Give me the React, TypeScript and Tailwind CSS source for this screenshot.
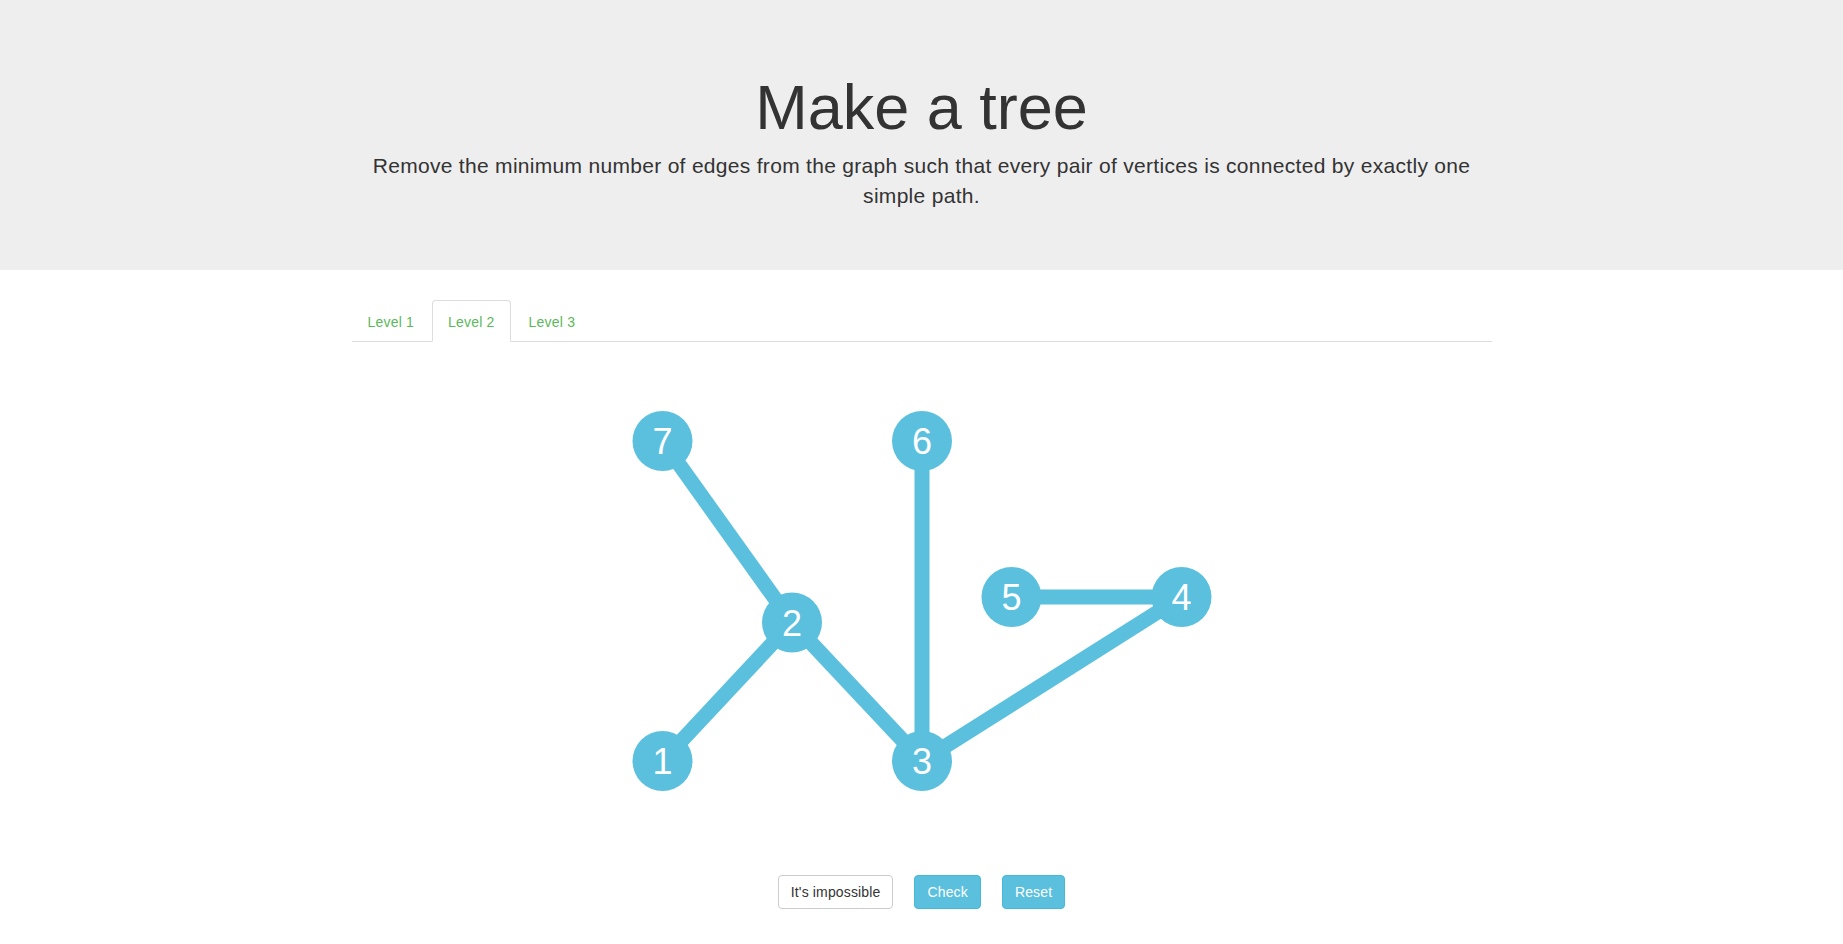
const FONT = { fontFamily: '"Liberation Sans", Arial, Helvetica, sans-serif' };

// graph coordinates are relative to the container content box
const nodes: Record<number, [number, number]> = {
  1: [310.5, 420],
  2: [440, 281.5],
  3: [570, 420],
  4: [829.5, 256],
  5: [659.5, 256],
  6: [570, 100],
  7: [310.5, 100],
};

const edges: [number, number][] = [
  [7, 2],
  [1, 2],
  [2, 3],
  [6, 3],
  [5, 4],
  [3, 4],
];

function Graph() {
  return (
    <svg width="1140" height="533" viewBox="0 1 1140 533" className="block">
      {edges.map(([a, b]) => (
        <line
          key={`${a}-${b}`}
          x1={nodes[a][0]}
          y1={nodes[a][1]}
          x2={nodes[b][0]}
          y2={nodes[b][1]}
          stroke="#5bc0de"
          strokeWidth={15}
        />
      ))}
      {Object.entries(nodes).map(([id, [x, y]]) => (
        <g key={id}>
          <circle cx={x} cy={y} r={30} fill="#5bc0de" />
          <text
            x={x}
            y={y + 13}
            textAnchor="middle"
            fill="#fff"
            fontSize={36}
            style={FONT}
          >
            {id}
          </text>
        </g>
      ))}
    </svg>
  );
}

export default function App() {
  const tabs = ["Level 1", "Level 2", "Level 3"];
  const active = 1;

  return (
    <div className="min-h-screen bg-white text-[#333]" style={FONT}>
      <div className="bg-[#eeeeee] pt-[73px] pb-[59px]">
        <div className="mx-auto w-[1170px] px-[15px] text-center">
          <h1 className="mb-[9px] text-[63px] leading-[1.1] font-normal">Make a tree</h1>
          <p className="text-[21px] leading-[30px] tracking-[0.3px]">
            Remove the minimum number of edges from the graph such that every pair of vertices is
            connected by exactly one simple path.
          </p>
        </div>
      </div>

      <div className="mx-auto mt-[30px] w-[1170px] px-[15px]">
        <ul className="flex border-b border-[#dddddd]">
          {tabs.map((t, i) => (
            <li key={t} className="-mb-px mr-[2px]">
              <span
                className={
                  i === active
                    ? "block rounded-t-[4px] border border-[#dddddd] border-b-transparent bg-white px-[15px] pt-[11px] pb-[9px] text-[14px] leading-[20px] tracking-[0.2px] text-[#5cb85c]"
                    : "block rounded-t-[4px] border border-transparent px-[15px] pt-[11px] pb-[9px] text-[14px] leading-[20px] tracking-[0.2px] text-[#5cb85c]"
                }
              >
                {t}
              </span>
            </li>
          ))}
        </ul>

        <Graph />

        <div className="flex justify-center gap-[21px]">
          <button className="h-[34px] rounded-[4px] border border-[#cccccc] bg-white px-[12px] text-[14px] leading-[20px] tracking-[0.15px] text-[#333]">
            It's impossible
          </button>
          <button className="h-[34px] rounded-[4px] border border-[#46b8da] bg-[#5bc0de] px-[12px] text-[14px] leading-[20px] tracking-[0.15px] text-white">
            Check
          </button>
          <button className="h-[34px] rounded-[4px] border border-[#46b8da] bg-[#5bc0de] px-[12px] text-[14px] leading-[20px] tracking-[0.15px] text-white">
            Reset
          </button>
        </div>
      </div>
    </div>
  );
}
